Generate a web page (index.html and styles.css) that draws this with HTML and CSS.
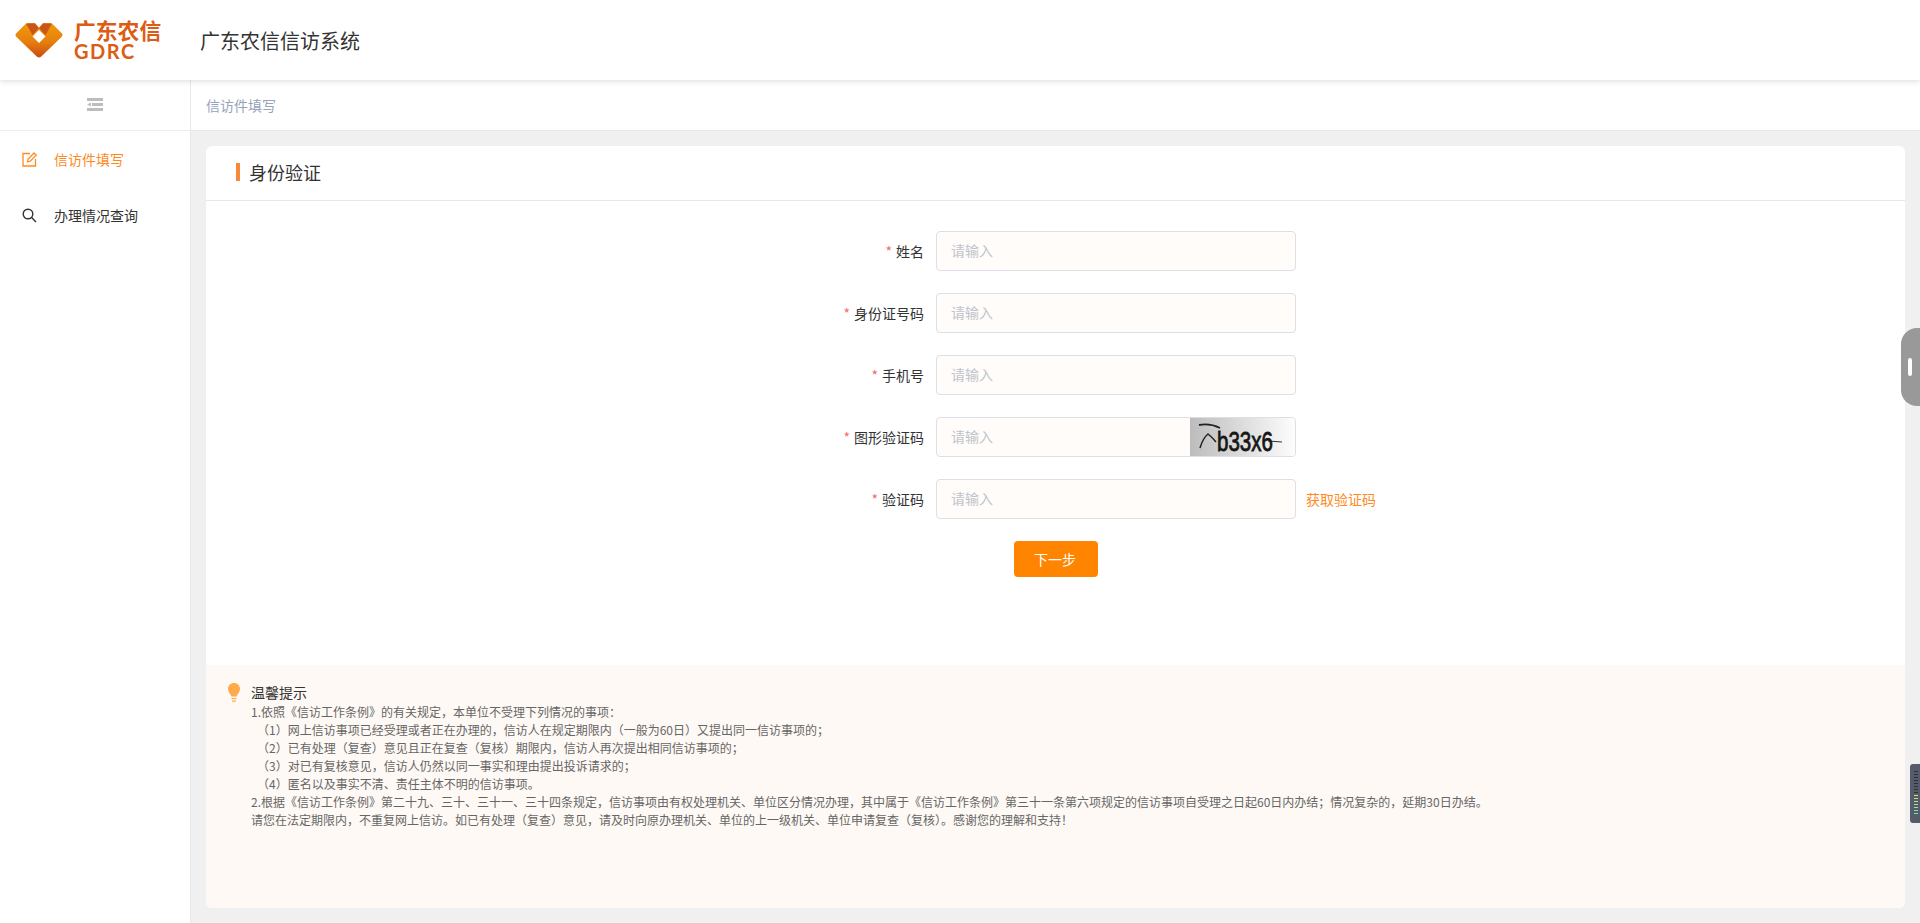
FILE: index.html
```html
<!DOCTYPE html>
<html lang="zh-CN">
<head>
    <meta charset="UTF-8">
    <meta name="viewport" content="width=device-width, initial-scale=1.0">
    <title>广东农信信访系统</title>
    <link rel="stylesheet" href="styles.css">
</head>
<body>
    <header class="topbar">
        <div class="logo">
            <svg class="logo-mark" width="48" height="35" viewBox="0 0 48 35">
                <defs>
                    <linearGradient id="logo-fill" x1="0" y1="0" x2="0" y2="1">
                        <stop offset="0" stop-color="#f09a0a"/>
                        <stop offset="0.55" stop-color="#e67f0c"/>
                        <stop offset="1" stop-color="#c94a16"/>
                    </linearGradient>
                </defs>
                <path d="M1 10.500 L10 1.500 Q11.500 0 13 0 L20 0 L24 5 L28 0 L35 0 Q36.500 0 38 1.500 L47 10.500 Q48 12 47 13.500 L26 33.800 Q24 35.200 22 33.800 L1 13.500 Q0 12 1 10.500 Z" fill="url(#logo-fill)"/>
                <path d="M11 0.500 L20 0.500 L24 5 L17.500 12 Z M37 0.500 L28 0.500 L24 5 L30.500 12 Z" fill="#c9551a"/>
                <path d="M24 7 L30.500 13.500 L24 20 L17.500 13.500 Z" fill="#fff"/>
            </svg>
            <div class="logo-text">
                <span class="logo-cn">广东农信</span>
                <span class="logo-en">GDRC</span>
            </div>
        </div>
        <div class="system-name">广东农信信访系统</div>
    </header>

    <div class="layout">
        <aside class="sidebar">
            <div class="sidebar-toggle">
                <svg width="16" height="13" viewBox="0 0 16 13" fill="#bdbdbd">
                    <rect x="0" y="0" width="16" height="3"/>
                    <rect x="5" y="5" width="11" height="3"/>
                    <path d="M0 6.500 L4 4.500 L4 8.500 Z"/>
                    <rect x="0" y="10" width="16" height="3"/>
                </svg>
            </div>
            <a class="menu-item active" href="#">
                <svg width="15" height="15" viewBox="0 0 15 15" fill="none" stroke="#ff8a1f" stroke-width="1.300">
                    <path d="M8 1.500 H1 V14 H13.500 V7"/>
                    <path d="M5.500 9.800 L6 7.300 L12 1 L14.200 3.200 L8 9.400 Z"/>
                </svg>
                <span>信访件填写</span>
            </a>
            <a class="menu-item" href="#">
                <svg width="15" height="15" viewBox="0 0 15 15" fill="none" stroke="#333" stroke-width="1.400">
                    <circle cx="6" cy="6" r="4.800"/>
                    <path d="M9.600 9.600 L14 14"/>
                </svg>
                <span>办理情况查询</span>
            </a>
        </aside>

        <div class="main">
            <div class="breadcrumb">信访件填写</div>
            <div class="content">
                <section class="card">
                    <h2 class="card-title"><span>身份验证</span></h2>
                    <form class="form">
                        <div class="form-row">
                            <label class="required">姓名</label>
                            <input class="field" type="text" placeholder="请输入">
                        </div>
                        <div class="form-row">
                            <label class="required">身份证号码</label>
                            <input class="field" type="text" placeholder="请输入">
                        </div>
                        <div class="form-row">
                            <label class="required">手机号</label>
                            <input class="field" type="text" placeholder="请输入">
                        </div>
                        <div class="form-row">
                            <label class="required">图形验证码</label>
                            <div class="field captcha-field">
                                <input type="text" placeholder="请输入">
                                <svg class="captcha" width="105" height="38" viewBox="0 0 105 38">
                                    <defs>
                                        <linearGradient id="captcha-bg">
                                            <stop offset="0" stop-color="#bcbcbc"/>
                                            <stop offset="1" stop-color="#fdfdfd"/>
                                        </linearGradient>
                                    </defs>
                                    <rect width="105" height="38" fill="url(#captcha-bg)"/>
                                    <path d="M10 30 Q13 20 18 16 Q22 19 26 24" fill="none" stroke="#222" stroke-width="1.500"/>
                                    <path d="M9 7 Q20 5 30 10" fill="none" stroke="#222" stroke-width="1.800"/>
                                    <path d="M78 23 L92 24" stroke="#333" stroke-width="1"/>
                                    <text class="captcha-text" x="27" y="33" textLength="56" lengthAdjust="spacingAndGlyphs">b33x6</text>
                                </svg>
                            </div>
                        </div>
                        <div class="form-row">
                            <label class="required">验证码</label>
                            <input class="field" type="text" placeholder="请输入">
                            <a class="send-code" href="#">获取验证码</a>
                        </div>
                        <div class="form-actions">
                            <button class="button" type="button">下一步</button>
                        </div>
                    </form>

                    <div class="tips">
                        <svg class="tips-icon" width="12" height="20" viewBox="0 0 12 20">
                            <path d="M6 0 C9.500 0 12 2.600 12 6 C12 9 9.800 10.500 8.500 13.500 L3.500 13.500 C2.200 10.500 0 9 0 6 C0 2.600 2.500 0 6 0 Z" fill="#ffab4a"/>
                            <rect x="3.500" y="15" width="5" height="1.200" fill="#ffab4a"/>
                            <rect x="4" y="17.500" width="4" height="1.200" fill="#ffab4a"/>
                        </svg>
                        <div class="tips-body">
                            <h3>温馨提示</h3>
                            <p>1.依照《信访工作条例》的有关规定，本单位不受理下列情况的事项：</p>
                            <p class="sub">（1）网上信访事项已经受理或者正在办理的，信访人在规定期限内（一般为60日）又提出同一信访事项的；</p>
                            <p class="sub">（2）已有处理（复查）意见且正在复查（复核）期限内，信访人再次提出相同信访事项的；</p>
                            <p class="sub">（3）对已有复核意见，信访人仍然以同一事实和理由提出投诉请求的；</p>
                            <p class="sub">（4）匿名以及事实不清、责任主体不明的信访事项。</p>
                            <p>2.根据《信访工作条例》第二十九、三十、三十一、三十四条规定，信访事项由有权处理机关、单位区分情况办理，其中属于《信访工作条例》第三十一条第六项规定的信访事项自受理之日起60日内办结；情况复杂的，延期30日办结。</p>
                            <p>请您在法定期限内，不重复网上信访。如已有处理（复查）意见，请及时向原办理机关、单位的上一级机关、单位申请复查（复核）。感谢您的理解和支持！</p>
                        </div>
                    </div>
                </section>
            </div>
        </div>
    </div>

    <div class="side-handle"><i></i></div>
    <div class="side-meter"><i></i></div>
</body>
</html>
```

FILE: styles.css
```css
* {
    box-sizing: border-box;
}
html, body {
    height: 100%;
}
body {
    margin: 0;
    font-family: "Noto Sans CJK SC", "Noto Sans", sans-serif;
    font-size: 14px;
    color: #333;
    background-color: #f0f0f0;
    display: flex;
    flex-direction: column;
    overflow: hidden;
}
a {
    text-decoration: none;
}

/* top bar */
.topbar {
    height: 80px;
    flex: none;
    display: flex;
    align-items: center;
    background-color: #fff;
    box-shadow: 0 1px 6px rgba(0,0,0,0.15);
    position: relative;
    z-index: 2;
}
.logo {
    width: 200px;
    padding-left: 15px;
    display: flex;
    align-items: center;
    gap: 11px;
}
.logo-mark {
    flex: none;
}
.logo-text {
    display: flex;
    flex-direction: column;
    color: #dc5c14;
    font-weight: 700;
}
.logo-cn {
    font-size: 21.800px;
    line-height: 21px;
    margin-top: -1px;
    white-space: nowrap;
}
.logo-en {
    font-family: Lato, sans-serif;
    font-size: 20px;
    line-height: 18px;
    letter-spacing: 1.500px;
    margin-top: 2px;
}
.system-name {
    font-size: 20px;
    color: #333;
}

/* layout */
.layout {
    flex: 1;
    display: flex;
    min-height: 0;
}
.sidebar {
    width: 191px;
    flex: none;
    background-color: #fff;
    border-right: 1px solid #e8e8e8;
}
.sidebar-toggle {
    height: 51px;
    display: flex;
    align-items: center;
    justify-content: center;
    padding-bottom: 1px;
    border-bottom: 1px solid #ececec;
}
.menu-item {
    height: 56px;
    display: flex;
    align-items: center;
    gap: 17px;
    padding-left: 22px;
    color: #333;
}
.menu-item.active {
    color: #ff8a1f;
}
.main {
    flex: 1;
    min-width: 0;
    display: flex;
    flex-direction: column;
}
.breadcrumb {
    height: 51px;
    flex: none;
    padding-left: 15px;
    line-height: 50px;
    color: #97a3bb;
    background-color: #fff;
    border-bottom: 1px solid #e8e8e8;
}
.content {
    flex: 1;
    min-height: 0;
    padding: 15px;
}

/* card */
.card {
    height: 100%;
    display: flex;
    flex-direction: column;
    background-color: #fff;
    border-radius: 6px;
    overflow: hidden;
}
.card-title {
    height: 55px;
    flex: none;
    margin: 0;
    padding: 0 0 2px 30px;
    display: flex;
    align-items: center;
    font-size: 18px;
    font-weight: 400;
    border-bottom: 1px solid #e8e8e8;
}
.card-title span {
    border-left: 4px solid #f58a3c;
    padding-left: 9px;
    line-height: 18px;
}

/* form */
.form {
    flex: none;
    height: 464px;
    padding-top: 30px;
    margin-left: 600px;
}
.form-row {
    height: 40px;
    margin-bottom: 22px;
    display: flex;
    align-items: center;
}
.form-row label {
    width: 118px;
    flex: none;
    padding-bottom: 1px;
    text-align: right;
    color: #333;
}
.required::before {
    content: "*";
    color: #f56c6c;
    margin-right: 4px;
}
.field {
    width: 360px;
    height: 40px;
    margin-left: 12px;
    padding: 0 14px 2px;
    font: inherit;
    color: #333;
    background-color: #fffcf9;
    border: 1px solid #dcdfe6;
    border-radius: 4px;
    outline: none;
}
.field::placeholder, .captcha-field input::placeholder {
    color: #c0c4cc;
}
.captcha-field {
    padding: 0 0 0 14px;
    display: flex;
    align-items: center;
    overflow: hidden;
}
.captcha-field input {
    flex: 1;
    min-width: 0;
    font: inherit;
    border: none;
    outline: none;
    padding: 0 0 2px;
    background: transparent;
}
.captcha {
    flex: none;
}
.captcha-text {
    font-family: "Liberation Sans", sans-serif;
    font-size: 27px;
    fill: #161616;
    stroke: #161616;
    stroke-width: 0.800;
}
.send-code {
    margin-left: 10px;
    padding-bottom: 1px;
    color: #ff8a1f;
}
.form-actions {
    width: 295px;
    margin-left: 113px;
    padding-left: 95px;
}
.button {
    width: 84px;
    height: 36px;
    padding: 0 2px 1px 0;
    font: inherit;
    color: #fff;
    background-color: #ff8400;
    border: none;
    border-radius: 4px;
    cursor: pointer;
}

/* tips */
.tips {
    flex: 1;
    padding: 20px 22px;
    display: flex;
    gap: 11px;
    font-size: 12px;
    line-height: 18px;
    color: #666;
    background-color: #fef9f5;
}
.tips-icon {
    flex: none;
    margin-top: -2px;
}
.tips-body h3 {
    margin: -2px 0 1px;
    font-size: 14px;
    line-height: 19px;
    font-weight: 400;
    color: #333;
}
.tips-body p {
    margin: 0;
}
.tips-body .sub {
    padding-left: 6px;
}

/* floating page widgets */
.side-handle {
    position: absolute;
    top: 328px;
    right: 0;
    width: 19px;
    height: 78px;
    display: flex;
    align-items: center;
    padding-left: 7px;
    background-color: #999;
    border-radius: 16px 0 0 16px;
    z-index: 3;
}
.side-handle i {
    display: block;
    width: 4px;
    height: 18px;
    background-color: #fff;
    border-radius: 2px;
}
.side-meter {
    position: absolute;
    top: 764px;
    right: 0;
    width: 10px;
    height: 59px;
    padding: 7px 2px 7px 4px;
    background-color: #565b6b;
    border-radius: 3px 0 0 3px;
    z-index: 3;
}
.side-meter i {
    display: block;
    height: 100%;
    background:
        repeating-linear-gradient(to bottom, transparent 0, transparent 1px, #565b6b 1px, #565b6b 3px),
        linear-gradient(to bottom, #2d303a 0, #2d303a 52%, #d8e26a 52%, #a8e090 75%, #62e0d0 100%);
}
```
